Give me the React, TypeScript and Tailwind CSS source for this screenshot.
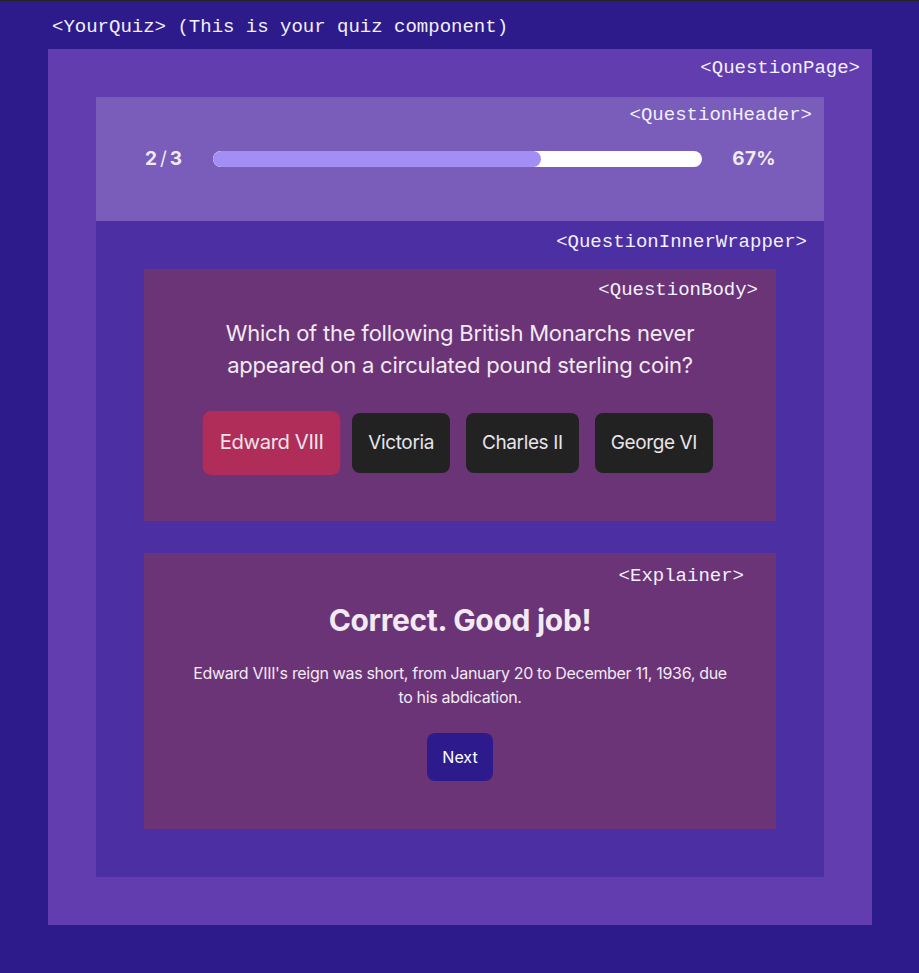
const mono = { fontFamily: '"Liberation Mono", "Courier New", monospace' };

function Label({ children, className = '' }: { children: string; className?: string }) {
  return (
    <div
      className={`text-right text-[19px] leading-5 text-[#f3f0ff] whitespace-pre ${className}`}
      style={mono}
    >
      {children}
    </div>
  );
}

const answers = ['Edward VIII', 'Victoria', 'Charles II', 'George VI'];

export default function App() {
  const current = 2;
  const total = 3;
  const pct = Math.round((current / total) * 100);

  return (
    <div
      className="min-h-[973px] bg-[#2d1b8b] border-t border-[#222222] pl-12 pr-[47px] pb-12 text-[#f2eaf3]"
      style={{ fontFamily: 'Inter, "Noto Sans", sans-serif' }}
    >
      <div className="h-12 pt-[16px] text-[19px] leading-5 text-[#f3f0ff] whitespace-pre pl-1" style={mono}>
        {'<YourQuiz> (This is your quiz component)'}
      </div>

      {/* QuestionPage */}
      <div className="bg-[#623db0] px-12 pb-12">
        <Label className="h-12 pt-[9px] -mr-12 pr-3">{'<QuestionPage>'}</Label>

        {/* QuestionHeader */}
        <div className="bg-[#7a5cbb] h-[124px]">
          <Label className="h-[48px] pt-2 pr-3">{'<QuestionHeader>'}</Label>
          <div className="flex items-center px-12 text-[19px] font-bold">
            <span className="w-[69px] pl-px">
              2<span className="font-normal mx-[3px]">/</span>3
            </span>
            <div className="flex-1 h-4 rounded-full bg-white overflow-hidden">
              <div className="h-full rounded-full bg-[#a28ef5]" style={{ width: `${pct}%` }} />
            </div>
            <span className="w-[74px] text-right tracking-[0.02em]">{pct}%</span>
          </div>
        </div>

        {/* QuestionInnerWrapper */}
        <div className="bg-[#4b2fa3] px-12 pb-12">
          <Label className="h-12 pt-[11px] -mr-12 pr-[17px]">{'<QuestionInnerWrapper>'}</Label>

          {/* QuestionBody */}
          <div className="bg-[#6b3477] h-[252px]">
            <Label className="h-[48px] pt-[11px] pr-[18px]">{'<QuestionBody>'}</Label>
            <p className="text-[22px] leading-8 text-center px-12 tracking-[-0.01em]">
              Which of the following British Monarchs never appeared on a circulated pound sterling coin?
            </p>
            <div className="flex justify-center gap-4 mt-8">
              {answers.map((a, i) => (
                <button
                  key={a}
                  className={`h-[60px] px-4 rounded-lg text-[19px] tracking-[-0.02em] text-[#e8e4e8] ${
                    i === 0 ? 'bg-[#b02d5a] scale-[1.066]' : 'bg-[#222222]'
                  }`}
                >
                  {a}
                </button>
              ))}
            </div>
          </div>

          {/* Explainer */}
          <div className="bg-[#6b3477] h-[276px] mt-8">
            <Label className="h-[49px] pt-[13px] pr-8">{'<Explainer>'}</Label>
            <h2 className="text-[30px] leading-9 font-bold text-center tracking-[-0.01em]">Correct. Good job!</h2>
            <p className="text-[16px] leading-6 text-center mt-[23px] px-12 tracking-[-0.02em]">
              Edward VIII's reign was short, from January 20 to December 11, 1936, due to his abdication.
            </p>
            <div className="flex justify-center mt-6">
              <button className="h-12 px-[15px] rounded-lg bg-[#2d1b8e] text-white text-[16px]">Next</button>
            </div>
          </div>
        </div>
      </div>
    </div>
  );
}
